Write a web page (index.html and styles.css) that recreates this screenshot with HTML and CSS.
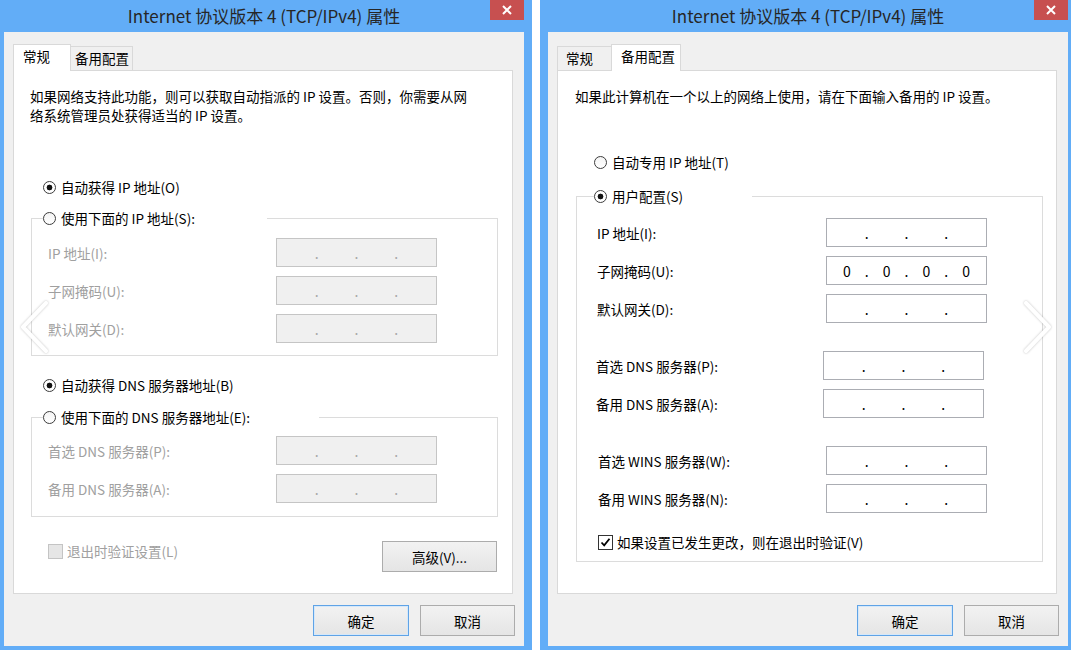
FILE: index.html
```html
<!DOCTYPE html>
<html lang="zh-CN">
<head>
	<meta charset="UTF-8">
	<title>Internet 协议版本 4 (TCP/IPv4) 属性</title>
	<link rel="stylesheet" href="styles.css">
</head>
<body>
	<div class="desk">

		<!-- 常规 -->
		<div class="win win_left">
			<div class="titlebar">
				<span class="title">Internet 协议版本 4 (TCP/IPv4) 属性</span>
				<span class="close"><svg width="10" height="10" viewBox="0 0 10 10"><path d="M1 1L9 9M9 1L1 9" stroke="#fff" stroke-width="2"/></svg></span>
			</div>
			<div class="client">
				<div class="tabs">
					<span class="tab current tab_l1">常规</span>
					<span class="tab tab_l2">备用配置</span>
				</div>
				<div class="panel panel_general">
					<p class="desc">如果网络支持此功能，则可以获取自动指派的 IP 设置。否则，你需要从网<br>络系统管理员处获得适当的 IP 设置。</p>

					<div class="radio on r_auto_ip">自动获得 IP 地址(O)</div>
					<fieldset class="group off g_ip">
						<legend class="radio lg_ip">使用下面的 IP 地址(S):</legend>
						<div class="row"><span class="label">IP 地址(I):</span><div class="ip"><span></span><i>.</i><span></span><i>.</i><span></span><i>.</i><span></span></div></div>
						<div class="row"><span class="label">子网掩码(U):</span><div class="ip"><span></span><i>.</i><span></span><i>.</i><span></span><i>.</i><span></span></div></div>
						<div class="row"><span class="label">默认网关(D):</span><div class="ip"><span></span><i>.</i><span></span><i>.</i><span></span><i>.</i><span></span></div></div>
					</fieldset>

					<div class="radio on r_auto_dns">自动获得 DNS 服务器地址(B)</div>
					<fieldset class="group off g_dns">
						<legend class="radio lg_dns">使用下面的 DNS 服务器地址(E):</legend>
						<div class="row"><span class="label">首选 DNS 服务器(P):</span><div class="ip"><span></span><i>.</i><span></span><i>.</i><span></span><i>.</i><span></span></div></div>
						<div class="row"><span class="label">备用 DNS 服务器(A):</span><div class="ip"><span></span><i>.</i><span></span><i>.</i><span></span><i>.</i><span></span></div></div>
					</fieldset>

					<div class="bottom_row">
						<span class="check off">退出时验证设置(L)</span>
						<button class="btn btn_adv">高级(V)...</button>
					</div>
				</div>
				<div class="actions">
					<button class="btn default">确定</button>
					<button class="btn">取消</button>
				</div>
			</div>
		</div>

		<!-- 备用配置 -->
		<div class="win win_right">
			<div class="titlebar">
				<span class="title">Internet 协议版本 4 (TCP/IPv4) 属性</span>
				<span class="close"><svg width="10" height="10" viewBox="0 0 10 10"><path d="M1 1L9 9M9 1L1 9" stroke="#fff" stroke-width="2"/></svg></span>
			</div>
			<div class="client">
				<div class="tabs">
					<span class="tab tab_r1">常规</span>
					<span class="tab current tab_r2">备用配置</span>
				</div>
				<div class="panel panel_alt">
					<p class="desc">如果此计算机在一个以上的网络上使用，请在下面输入备用的 IP 设置。</p>

					<div class="radio r_private">自动专用 IP 地址(T)</div>
					<fieldset class="group g_user">
						<legend class="radio on lg_user">用户配置(S)</legend>
						<div class="row"><span class="label">IP 地址(I):</span><div class="ip"><span></span><i>.</i><span></span><i>.</i><span></span><i>.</i><span></span></div></div>
						<div class="row"><span class="label">子网掩码(U):</span><div class="ip"><span>0</span><i>.</i><span>0</span><i>.</i><span>0</span><i>.</i><span>0</span></div></div>
						<div class="row"><span class="label">默认网关(D):</span><div class="ip"><span></span><i>.</i><span></span><i>.</i><span></span><i>.</i><span></span></div></div>

						<div class="row row_dns sep"><span class="label">首选 DNS 服务器(P):</span><div class="ip"><span></span><i>.</i><span></span><i>.</i><span></span><i>.</i><span></span></div></div>
						<div class="row row_dns"><span class="label">备用 DNS 服务器(A):</span><div class="ip"><span></span><i>.</i><span></span><i>.</i><span></span><i>.</i><span></span></div></div>

						<div class="row row_wins sep"><span class="label">首选 WINS 服务器(W):</span><div class="ip"><span></span><i>.</i><span></span><i>.</i><span></span><i>.</i><span></span></div></div>
						<div class="row row_wins"><span class="label">备用 WINS 服务器(N):</span><div class="ip"><span></span><i>.</i><span></span><i>.</i><span></span><i>.</i><span></span></div></div>

						<span class="check on verify">如果设置已发生更改，则在退出时验证(V)</span>
					</fieldset>
				</div>
				<div class="actions">
					<button class="btn default">确定</button>
					<button class="btn">取消</button>
				</div>
			</div>
		</div>

		<!-- 看图器的翻页箭头 -->
		<svg class="nav nav_prev" width="34" height="56" viewBox="0 0 34 56"><polyline points="27,4 4,28 27,52" fill="none" stroke="#fff" stroke-width="4" stroke-linecap="round" stroke-linejoin="round"/></svg>
		<svg class="nav nav_next" width="34" height="56" viewBox="0 0 34 56"><polyline points="7,4 30,28 7,52" fill="none" stroke="#fff" stroke-width="4" stroke-linecap="round" stroke-linejoin="round"/></svg>
	</div>
</body>
</html>
```

FILE: styles.css
```css
* { box-sizing: border-box; }

body {
	margin: 0;
	background: #fff;
	overflow: hidden;
	font-family: "Noto Sans CJK SC", "Liberation Sans", sans-serif;
	font-size: 13.5px;
	color: #000;
}

.desk {
	display: flex;
	gap: 8px;
	height: 650px;
	position: relative;
}

/* 窗口 */
.win {
	width: 536px;
	height: 654px;
	flex: none;
	background: #62adf7;
	padding: 0 8px;
}
.win_left { margin-left: -4px; }

.titlebar {
	height: 32px;
	position: relative;
	text-align: center;
	font-size: 17px;
	line-height: 31px;
	color: #262626;
}

.close {
	position: absolute;
	right: 0;
	top: 0;
	width: 34px;
	height: 20px;
	background: #c75050;
	display: flex;
	align-items: center;
	justify-content: center;
}

.client {
	background: #f0f0f0;
	height: 614px;
	padding: 12px 11px 0 9px;
}

/* 选项卡 */
.tabs {
	display: flex;
	align-items: flex-end;
	height: 26px;
	position: relative;
	z-index: 1;
}

.tab {
	height: 24px;
	line-height: 23px;
	border: 1px solid #d9d9d9;
	border-bottom: none;
	background: #f0f0f0;
	padding-left: 8px;
	white-space: nowrap;
}
.tab.current {
	height: 27px;
	margin-bottom: -1px;
	background: #fff;
	line-height: 22px;
}
.tab_l1 { width: 58px; padding-left: 9px; }
.tab_l2 { width: 62px; padding-left: 4px; border-left: none; }
.tab_r1 { width: 54px; border-right: none; }
.tab_r2 { width: 70px; padding-left: 9px; }

.panel {
	height: 524px;
	background: #fff;
	border: 1px solid #d9d9d9;
	display: flow-root;
}

.desc {
	margin: 16px 0 0 16px;
	line-height: 19px;
}
.panel_alt .desc { margin-left: 17px; }

/* 单选 / 复选 */
.radio {
	display: flex;
	align-items: center;
	height: 20px;
	white-space: nowrap;
}
.radio::before {
	content: "";
	flex: none;
	width: 13px;
	height: 13px;
	border: 1px solid #3c3c3c;
	border-radius: 50%;
	background: linear-gradient(#f4f4f4, #fff);
	margin-right: 5px;
	box-sizing: border-box;
}
.radio.on::before {
	background: radial-gradient(circle, #111 0, #111 2.6px, #fff 3.2px);
}

.check {
	display: flex;
	align-items: center;
	height: 20px;
	white-space: nowrap;
}
.check::before {
	content: "";
	flex: none;
	width: 13px;
	height: 13px;
	border: 1px solid #333;
	background: #fff;
	margin-right: 4px;
}
.check.on::before {
	background: #fff url("data:image/svg+xml,%3Csvg xmlns='http://www.w3.org/2000/svg' width='11' height='11' viewBox='0 0 11 11'%3E%3Cpath d='M1.5 5.5L4.2 8.3L9.5 1.8' fill='none' stroke='%23000' stroke-width='1.8'/%3E%3C/svg%3E") no-repeat center;
}
.check.off { color: #a0a0a0; }
.check.off::before { border-color: #c4c4c4; background: #e6e6e6; }

.r_auto_ip { margin: 52px 0 0 29px; }
.r_auto_dns { margin: 19px 0 0 29px; }
.r_private { margin: 46px 0 0 36px; }

/* 分组框 */
.group {
	margin: 11px 0 0 17px;
	width: 467px;
	padding: 0 0 12px 16px;
	border: 1px solid #dcdcdc;
	min-width: 0;
}
.group legend {
	padding: 0;
	margin-left: -5px;
	color: #000;
}
.g_ip .row:first-of-type { margin-top: 10px; }
.g_dns { margin-top: 12px; padding-bottom: 13px; }
.g_dns .row:first-of-type { margin-top: 9px; }
.lg_ip { width: 224px; }
.lg_dns { width: 276px; }

.g_user {
	margin: 14px 0 0 18px;
	padding: 0 0 9px 20px;
}
.group .lg_user { width: 158px; margin-left: -3px; }
.g_user .row:first-of-type { margin-top: 12px; }

.row {
	display: flex;
	align-items: center;
	height: 29px;
	margin-top: 9px;
}
.row.sep { margin-top: 28px; }
.label { width: 229px; flex: none; white-space: nowrap; }
.g_ip .label, .g_dns .label { width: 228px; }
.row_dns { margin-left: -1px; }
.row_dns .label { width: 227px; }
.row_wins { margin-left: 1px; }
.row_wins .label { width: 228px; }

.off { color: #a0a0a0; }
.off legend, .off .radio { color: #000; }

/* IP 地址框 */
.ip {
	display: flex;
	align-items: center;
	width: 161px;
	height: 29px;
	border: 1px solid #abadb3;
	background: #fff;
	font-size: 14px;
}
.ip span { flex: 1; text-align: center; }
.ip i {
	width: 0;
	display: flex;
	justify-content: center;
	font-style: normal;
}
.off .ip { background: #f0f0f0; border-color: #c5c5c5; color: #a8a8a8; }

.verify { margin: 19px 0 0 1px; }

.bottom_row {
	display: flex;
	align-items: flex-start;
	justify-content: space-between;
	margin: 24px 15px 0 34px;
}

/* 按钮 */
.btn {
	font: inherit;
	color: #000;
	height: 31px;
	border: 1px solid #acacac;
	background: linear-gradient(#f2f2f2, #e5e5e5);
	padding: 0;
}
.btn_adv { width: 115px; }
.btn.default { border-color: #5fa3e6; box-shadow: inset 0 0 0 1px #d5e8fa; }

.actions {
	display: flex;
	justify-content: flex-end;
	gap: 11px;
	margin: 11px -2px 0 0;
}
.actions .btn { width: 95px; }
.actions .btn.default { width: 96px; }

/* 翻页箭头 */
.nav {
	position: absolute;
	top: 299px;
	filter: drop-shadow(0 0 1px rgba(0, 0, 0, .25));
}
.nav_prev { left: 19px; }
.nav_next { left: 1019px; }
```
